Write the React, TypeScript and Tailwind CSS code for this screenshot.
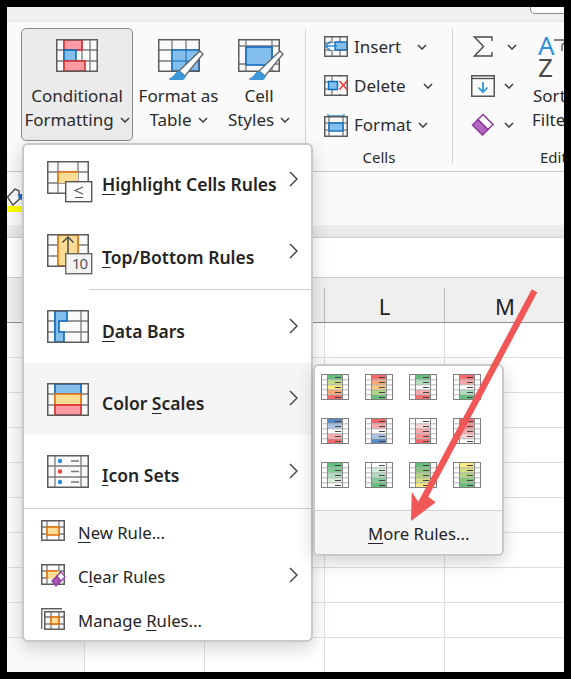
import { ReactNode } from 'react'

const font = '[font-family:"Noto_Sans","Open_Sans",sans-serif]'

function Tbl({ w = 42, h = 33, cols, rows, children }: { w?: number; h?: number; cols: number[]; rows: number[]; children?: ReactNode }) {
  return (
    <g>
      <rect x="0.75" y="0.75" width={w - 1.5} height={h - 1.5} fill="#fafafa" />
      {cols.map((x) => <line key={x} x1={x} x2={x} y1="1" y2={h - 1} stroke="#7a7a7a" strokeWidth="1.3" />)}
      {rows.map((y) => <line key={y} x1="1" x2={w - 1} y1={y} y2={y} stroke="#7a7a7a" strokeWidth="1.3" />)}
      {children}
      <rect x="0.75" y="0.75" width={w - 1.5} height={h - 1.5} fill="none" stroke="#5c5c5c" strokeWidth="1.5" />
    </g>
  )
}

function Cell({ x, y, w, h, fill, stroke }: { x: number; y: number; w: number; h: number; fill: string; stroke: string }) {
  return <rect x={x} y={y} width={w} height={h} fill={fill} stroke={stroke} strokeWidth="1.6" />
}

const blue = { fill: '#83beec', stroke: '#0f6cbd' }
const red = { fill: '#ff99a4', stroke: '#d8312f' }
const orange = { fill: '#fbdc95', stroke: '#e8730c' }

function Brush({ x, y }: { x: number; y: number }) {
  return (
    <g transform={`translate(${x} ${y})`}>
      <path d="M31 0 L34 3 L16 25 L10 20 Z" fill="#fff" stroke="#666" strokeWidth="1.3" />
      <path d="M10 20 C6 21 6 26 0 28 C7 30 17 30 16 25 Z" fill="#3f97dc" stroke="#2f86cc" strokeWidth="0.8" />
    </g>
  )
}

function CondIcon() {
  return (
    <svg width="42" height="33">
      <Tbl cols={[8, 26, 34]} rows={[11, 22]}>
        <Cell x={8} y={1} w={18} h={10} {...red} />
        <Cell x={8} y={11} w={12} h={11} {...blue} />
        <Cell x={8} y={22} w={21} h={10} {...red} />
      </Tbl>
    </svg>
  )
}

function TableStyleIcon() {
  return (
    <svg width="46" height="41" className="ml-[4px]">
      <Tbl cols={[14, 28]} rows={[11, 22]}>
        <rect x="14" y="11" width="27" height="21" fill="#83beec" stroke="#0f6cbd" strokeWidth="1.4" />
        <line x1="14" x2="41" y1="22" y2="22" stroke="#0f6cbd" strokeWidth="1" />
        <line x1="28" x2="28" y1="11" y2="32" stroke="#0f6cbd" strokeWidth="1" />
      </Tbl>
      <Brush x={11} y={12} />
    </svg>
  )
}

function CellStyleIcon() {
  return (
    <svg width="46" height="41" className="ml-[3px]">
      <Tbl cols={[8, 34]} rows={[7, 25]}>
        <rect x="8" y="8" width="26" height="18" fill="#83beec" stroke="#0f6cbd" strokeWidth="1.6" />
      </Tbl>
      <Brush x={11} y={12} />
    </svg>
  )
}

function HighlightIcon() {
  return (
    <svg width="46" height="42">
      <Tbl cols={[11, 31]} rows={[11, 22]}>
        <rect x="11" y="11" width="20" height="11" fill="#fbdc95" />
        <path d="M11 22 V11 H31" fill="none" stroke="#e8730c" strokeWidth="1.6" />
      </Tbl>
      <rect x="18.7" y="20.7" width="26" height="20" fill="#fafafa" stroke="#555" strokeWidth="1.4" />
      <path d="M36 26 L28 29.5 L36 33 M28 36.5 H36" fill="none" stroke="#555" strokeWidth="1.1" />
    </svg>
  )
}

function TopBottomIcon() {
  return (
    <svg width="46" height="41">
      <Tbl cols={[11, 31]} rows={[11, 22]}>
        <Cell x={11} y={1} w={20} h={31} {...orange} />
      </Tbl>
      <path d="M21 19 V3 M15.5 8.5 L21 3 L26.5 8.5" fill="none" stroke="#444" strokeWidth="1.4" />
      <rect x="18.7" y="19.7" width="26" height="20" fill="#f3f3f3" stroke="#666" strokeWidth="1.4" />
      <text x="25" y="35" fontSize="15" fill="#555" fontFamily="Noto Sans" letterSpacing="-1">10</text>
    </svg>
  )
}

function DataBarsIcon() {
  return (
    <svg width="42" height="33">
      <Tbl cols={[8, 34]} rows={[11, 22]}>
        <path d="M8 1 H20 V11 H12 V22 H17 V32 H8 Z" fill="#83beec" stroke="#0f6cbd" strokeWidth="1.6" />
      </Tbl>
    </svg>
  )
}

function ScalesIcon() {
  return (
    <svg width="42" height="33">
      <Tbl cols={[8, 34]} rows={[11, 22]}>
        <Cell x={8} y={1} w={26} h={10} {...blue} />
        <Cell x={8} y={11} w={26} h={11} fill="#fbdc95" stroke="#e8730c" />
        <Cell x={8} y={22} w={26} h={10} {...red} />
      </Tbl>
    </svg>
  )
}

function IconSetsIcon() {
  return (
    <svg width="42" height="33">
      <Tbl cols={[8, 34]} rows={[11, 22]}>
        <circle cx="13" cy="6" r="2.2" fill="#2a8fdc" />
        <circle cx="13" cy="16.5" r="2.2" fill="#ee4444" />
        <circle cx="13" cy="27" r="2.2" fill="#2a8fdc" />
        <path d="M24 6 H32 M24 16.5 H32 M24 27 H32" stroke="#777" strokeWidth="1.4" />
      </Tbl>
    </svg>
  )
}

function NewRuleIcon() {
  return (
    <svg width="24" height="22">
      <Tbl w={24} h={21} cols={[6, 18]} rows={[7, 14]}>
        <Cell x={6} y={7} w={12} h={8} {...orange} />
      </Tbl>
    </svg>
  )
}

function ClearRuleIcon() {
  return (
    <svg width="25" height="23">
      <Tbl w={24} h={21} cols={[6, 18]} rows={[7, 14]}>
        <rect x="6" y="7" width="12" height="8" fill="#fbdc95" />
        <path d="M6 15 V7 H16" fill="none" stroke="#e8730c" strokeWidth="1.6" />
      </Tbl>
      <path d="M10 17 L20 8 L25 13 L15 22 Z" fill="#fff" />
      <path d="M11 17 L16 12 L20 17 L15 22 Z" fill="#a855b5" stroke="#8b3a9a" strokeWidth="1.2" />
      <path d="M16 12 L20 8 L24 13 L20 17 Z" fill="#fff" stroke="#8b3a9a" strokeWidth="1.2" />
    </svg>
  )
}

function ManageRuleIcon() {
  return (
    <svg width="24" height="23">
      <path d="M0.75 21 V0.75 H21" fill="none" stroke="#5c5c5c" strokeWidth="1.3" />
      <g transform="translate(3 3)">
        <Tbl w={21} h={19} cols={[7, 15]} rows={[6, 13]}>
          <Cell x={7} y={6} w={8} h={7} {...orange} />
        </Tbl>
      </g>
    </svg>
  )
}

function InsertIcon() {
  return (
    <svg width="24" height="21">
      <Tbl w={24} h={21} cols={[8, 16]} rows={[7, 14]}>
        <rect x="7" y="7" width="17" height="7" fill="#fff" />
        <rect x="11" y="6" width="12" height="8" fill="#83beec" stroke="#0f6cbd" strokeWidth="1.4" />
      </Tbl>
      <path d="M13 10 H2 M6.5 5 L1.5 10 L6.5 15" fill="none" stroke="#2a8fdc" strokeWidth="1.6" />
    </svg>
  )
}

function DeleteIcon() {
  return (
    <svg width="24" height="21">
      <Tbl w={24} h={21} cols={[8, 16]} rows={[7, 14]}>
        <rect x="13" y="2" width="11" height="17" fill="#fafafa" />
        <rect x="4.5" y="6.5" width="9" height="8" fill="#83beec" stroke="#0f6cbd" strokeWidth="1.5" />
      </Tbl>
      <path d="M15.5 6 L23 14.5 M23 6 L15.5 14.5" stroke="#e83b3b" strokeWidth="1.6" />
    </svg>
  )
}

function FormatIcon() {
  return (
    <svg width="24" height="24">
      <path d="M4 1 V5 M20 1 V5 M4 3 H20" stroke="#2a8fdc" strokeWidth="1.3" />
      <g transform="translate(0 3)">
        <Tbl w={24} h={21} cols={[5, 19]} rows={[7, 14]}>
          <rect x="5" y="7" width="14" height="8" fill="#83beec" stroke="#0f6cbd" strokeWidth="1.4" />
        </Tbl>
      </g>
    </svg>
  )
}

function SigmaIcon() {
  return (
    <svg width="20" height="21">
      <path d="M19 5 V1 H1.5 L10.5 10.5 L1.5 20 H19 V16" fill="none" stroke="#4a4a4a" strokeWidth="1.4" />
    </svg>
  )
}

function FillIcon() {
  return (
    <svg width="24" height="22">
      <rect x="0.75" y="0.75" width="22.5" height="20.5" fill="#fafafa" stroke="#555" strokeWidth="1.5" />
      <line x1="1" x2="23" y1="3.5" y2="3.5" stroke="#555" strokeWidth="1.4" />
      <path d="M12 7 V17 M7.5 12.5 L12 17 L16.5 12.5" fill="none" stroke="#2a8fdc" strokeWidth="1.7" />
    </svg>
  )
}

function EraserIcon() {
  return (
    <svg width="24" height="24">
      <path d="M1.5 12 L7 6.5 L17 16.5 L11.5 22 Z" fill="#b565c4" stroke="#8b3a9a" strokeWidth="1.5" />
      <path d="M7 6.5 L12 1.5 L22 11.5 L17 16.5 Z" fill="#fafafa" stroke="#8b3a9a" strokeWidth="1.5" />
    </svg>
  )
}

function Bucket() {
  return (
    <svg width="15" height="18">
      <path d="M0.5 9 L8 1 L12 3 L12.5 11 L6 17 Z" fill="#fafafa" stroke="#444" strokeWidth="1.3" />
      <path d="M11 6 L15 6 L15 12 L12 11 Z" fill="#1f6fc0" />
    </svg>
  )
}

function Down() {
  return (
    <svg width="10" height="6" className="shrink-0">
      <path d="M1 1 L5 5 L9 1" fill="none" stroke="#3c3c3c" strokeWidth="1.5" />
    </svg>
  )
}

function Right() {
  return (
    <svg width="9" height="16" className="shrink-0">
      <path d="M1 1 L8 8 L1 15" fill="none" stroke="#4a4a4a" strokeWidth="1.5" />
    </svg>
  )
}

function Key({ children }: { children: ReactNode }) {
  return <span className="underline underline-offset-[3px]">{children}</span>
}

function RibbonButton({ icon, children, className }: { icon: ReactNode; children: ReactNode; className: string }) {
  return (
    <div className={`flex shrink-0 flex-col items-center pt-[10px] text-center text-[17px] leading-[24px] ${className}`}>
      <div className="flex h-[45px] items-start">{icon}</div>
      {children}
    </div>
  )
}

function CellRow({ icon, label, textClass }: { icon: ReactNode; label: string; textClass: string }) {
  return (
    <div className="flex h-[39px] items-center text-[17px]">
      <div className="flex w-[30px] shrink-0 justify-start">{icon}</div>
      <span className={`shrink-0 ${textClass}`}>{label}</span>
      <Down />
    </div>
  )
}

function Ribbon() {
  return (
    <div className="flex h-[150px] shrink-0 items-start overflow-hidden whitespace-nowrap border-b border-[#c9c9c9] bg-[#fafafa] text-[#2b2b2b]">
      <RibbonButton
        icon={<CondIcon />}
        className="ml-[14px] mt-[6px] h-[113px] w-[112px] rounded-[5px] border border-[#8a8a8a] bg-[#ebebeb]"
      >
        <span>Conditional</span>
        <span className="flex items-center gap-[6px]">Formatting <Down /></span>
      </RibbonButton>
      <RibbonButton icon={<TableStyleIcon />} className="mt-[7px] ml-[2px] w-[87px]">
        <span>Format as</span>
        <span className="flex items-center gap-[6px]">Table <Down /></span>
      </RibbonButton>
      <RibbonButton icon={<CellStyleIcon />} className="mt-[7px] ml-[6px] w-[62px]">
        <span>Cell</span>
        <span className="flex items-center gap-[6px]">Styles <Down /></span>
      </RibbonButton>

      <div className="ml-[15px] mt-[7px] h-[134px] w-px shrink-0 bg-[#d4d4d4]" />

      <div className="flex w-[146px] shrink-0 flex-col pl-[18px] pt-[5px]">
        <CellRow icon={<InsertIcon />} label="Insert" textClass="w-[63px]" />
        <CellRow icon={<DeleteIcon />} label="Delete" textClass="w-[69px]" />
        <CellRow icon={<FormatIcon />} label="Format" textClass="w-[64px]" />
        <div className="-ml-[18px] mt-[2px] text-center text-[15px] leading-[22px]">Cells</div>
      </div>

      <div className="mt-[7px] h-[134px] w-px shrink-0 bg-[#d4d4d4]" />

      <div className="flex shrink-0 flex-col pl-[18px] pt-[5px]">
        <div className="flex h-[39px] items-center gap-[14px] pl-[2px]"><SigmaIcon /><Down /></div>
        <div className="flex h-[39px] items-center gap-[9px]"><FillIcon /><Down /></div>
        <div className="flex h-[39px] items-center gap-[9px]"><EraserIcon /><Down /></div>
      </div>

      <div className="ml-[16px] flex shrink-0 flex-col text-[17px] leading-[24px]">
        <div className="ml-[5px] mt-[12px] flex items-start">
          <div className="flex flex-col text-[26px] leading-[22px]">
            <span className="text-[#2a8fdc]">A</span>
            <span className="text-[#4a4a4a]">Z</span>
          </div>
          <svg width="14" height="14" className="ml-[-2px] mt-[5px] shrink-0">
            <path d="M1 1 H14 L9 6 V12" fill="none" stroke="#555" strokeWidth="1.3" />
          </svg>
        </div>
        <span className="mt-[6px]">Sort &amp;</span>
        <span className="-ml-px">Filter</span>
        <span className="ml-[7px] mt-[14px] text-[15px] leading-[22px]">Editing</span>
      </div>
    </div>
  )
}

function Sheet() {
  return (
    <div className="flex flex-1 flex-col overflow-hidden">
      {/* formula bar remains */}
      <div className="h-[53px] shrink-0 bg-[#fafafa] pt-[16px]">
        <Bucket />
        <div className="h-[6px] w-[15px] bg-[#ffff00]" />
      </div>
      <div className="h-[13px] shrink-0 border-b border-[#d0d0d0] bg-gradient-to-b from-[#efefef] to-[#e6e6e6]" />
      <div className="h-[39px] shrink-0 bg-white" />
      <div className="flex h-[46px] shrink-0 border-y border-t-[#cfcfcf] border-b-[#8e8e8e] bg-[#efefef] text-[22px] text-[#222]">
        <div className="w-[78px] shrink-0" />
        <div className="w-[120px] shrink-0" />
        <div className="mt-[10px] w-[120px] shrink-0 border-r border-[#b5b5b5]" />
        <div className="mt-[10px] flex w-[120px] shrink-0 justify-center border-r border-[#b5b5b5] leading-[36px]">L</div>
        <div className="flex w-[120px] shrink-0 justify-center leading-[56px]">M</div>
      </div>
      {Array.from({ length: 10 }).map((_, i) => (
        <div key={i} className="flex h-[35px] shrink-0 border-b border-[#dedede]">
          <div className="w-[78px] shrink-0 border-r border-[#dedede] bg-[#fafafa]" />
          <div className="w-[120px] shrink-0 border-r border-[#dedede]" />
          <div className="w-[120px] shrink-0 border-r border-[#dedede]" />
          <div className="w-[120px] shrink-0 border-r border-[#dedede]" />
          <div className="w-[120px] shrink-0" />
        </div>
      ))}
    </div>
  )
}

const mainItems = [
  { icon: <HighlightIcon />, label: <><Key>H</Key>ighlight Cells Rules</>, rowClass: 'h-[74px]', textClass: 'pt-[4px]', arrowClass: 'pb-[6px]' },
  { icon: <TopBottomIcon />, label: <><Key>T</Key>op/Bottom Rules</>, rowClass: 'h-[70px]', textClass: 'pt-[6px]', arrowClass: 'pb-[6px]' },
  { icon: <DataBarsIcon />, label: <><Key>D</Key>ata Bars</>, rowClass: 'h-[73px]', textClass: 'pt-[10px]', arrowClass: 'pb-[2px]' },
  { icon: <ScalesIcon />, label: <>Color <Key>S</Key>cales</>, rowClass: 'h-[72px] bg-[#f5f5f5]', textClass: 'pt-[8px]', arrowClass: 'pb-[2px]' },
  { icon: <IconSetsIcon />, label: <><Key>I</Key>con Sets</>, rowClass: 'h-[73px]', textClass: 'pt-[8px]', arrowClass: 'pb-[2px]' },
]

const smallItems = [
  { icon: <NewRuleIcon />, label: <><Key>N</Key>ew Rule...</>, more: false },
  { icon: <ClearRuleIcon />, label: <>C<Key>l</Key>ear Rules</>, more: true },
  { icon: <ManageRuleIcon />, label: <>Manage <Key>R</Key>ules...</>, more: false },
]

function RulesMenu() {
  return (
    <div className="absolute left-[15px] top-[136px] h-[499px] w-[291px] overflow-hidden rounded-[6px] border-2 border-[#c8c8c8] bg-white text-[#242424] shadow-[0_6px_18px_rgba(0,0,0,0.18)]">
      {mainItems.map((item, i) => (
        <div key={i}>
          <div className={`flex items-center pl-[23px] pr-[13px] ${item.rowClass}`}>
            <div className="flex w-[55px] shrink-0">{item.icon}</div>
            <span className={`text-[17.5px] font-semibold ${item.textClass}`}>{item.label}</span>
            <div className={`ml-auto flex ${item.arrowClass}`}><Right /></div>
          </div>
          {i === 1 && <div className="ml-[65px] h-px bg-[#d0d0d0]" />}
        </div>
      ))}
      <div className="h-px bg-[#d0d0d0]" />
      {smallItems.map((item, i) => (
        <div key={i} className="flex h-[44px] items-center pl-[17px] pr-[13px]">
          <div className="flex w-[37px] shrink-0">{item.icon}</div>
          <span className="pt-[4px] text-[16.7px]">{item.label}</span>
          {item.more && <div className="ml-auto flex"><Right /></div>}
        </div>
      ))}
    </div>
  )
}

const scales = [
  ['#63be7b', '#c5da84', '#fdea84', '#fba777', '#f8696b'],
  ['#f8696b', '#fba777', '#fcc87d', '#b1d580', '#63be7b'],
  ['#63be7b', '#b1dcbd', '#ffffff', '#fbaaac', '#f8696b'],
  ['#f8696b', '#fbaaac', '#ffffff', '#b1dcbd', '#63be7b'],
  ['#5a8ac6', '#a9c4e4', '#ffffff', '#fbaaac', '#f8696b'],
  ['#f8696b', '#fbaaac', '#ffffff', '#a9c4e4', '#5a8ac6'],
  ['#ffffff', '#fcd4d4', '#fbaaac', '#fa8f8f', '#f8696b'],
  ['#f8696b', '#fa8f8f', '#fbaaac', '#fcd4d4', '#ffffff'],
  ['#63be7b', '#83cb95', '#b1dcbd', '#d8eedd', '#ffffff'],
  ['#ffffff', '#d8eedd', '#b1dcbd', '#83cb95', '#63be7b'],
  ['#63be7b', '#85c67c', '#b1d580', '#d4de82', '#ffeb84'],
  ['#ffeb84', '#d4de82', '#b1d580', '#85c67c', '#63be7b'],
]

function ScaleIcon({ colors }: { colors: string[] }) {
  return (
    <svg width="28" height="26">
      <rect x="0.5" y="0.5" width="27" height="25" fill="#fff" />
      {colors.map((c, i) => (
        <g key={i}>
          <rect x="6.5" y={1 + i * 5} width="15" height="4.6" fill={c} />
          <line x1="14" x2="20" y1={3.5 + i * 5} y2={3.5 + i * 5} stroke="#444" strokeWidth="1" />
        </g>
      ))}
      {[1, 2, 3, 4].map((i) => (
        <line key={i} x1="1" x2="27" y1={0.8 + i * 5} y2={0.8 + i * 5} stroke="#a3a3a3" strokeWidth="0.8" />
      ))}
      <path d="M6.5 1 V25 M21.5 1 V25" stroke="#8a8a8a" strokeWidth="1" />
      <rect x="0.5" y="0.5" width="27" height="25" fill="none" stroke="#7f7f7f" strokeWidth="1" />
    </svg>
  )
}

function ScalesMenu() {
  return (
    <div className="absolute left-[306px] top-[357px] w-[191px] overflow-hidden rounded-[6px] border-2 border-[#c8c8c8] bg-white text-[#242424] shadow-[0_6px_18px_rgba(0,0,0,0.18)]">
      <div className="grid grid-cols-[repeat(4,28px)] gap-x-[16px] gap-y-[18px] pb-[22px] pl-[6px] pt-[8px]">
        {scales.map((colors, i) => <ScaleIcon key={i} colors={colors} />)}
      </div>
      <div className="flex h-[44px] items-center border-t border-[#d0d0d0] bg-[#f5f5f5] pl-[53px] pt-[3px] text-[16.7px]">
        <span><Key>M</Key>ore Rules...</span>
      </div>
    </div>
  )
}

function RedArrow() {
  return (
    <svg width="557" height="665" viewBox="7 7 557 665" className="pointer-events-none absolute left-0 top-0">
      <polygon
        points="411,521 411.7,491.7 418.3,501.7 531.7,289.3 537.3,292.3 428.3,496.7 435.7,502.3"
        fill="#f25757"
      />
    </svg>
  )
}

export default function App() {
  return (
    <div className={`h-[679px] w-[571px] bg-black p-[7px] ${font}`}>
      <div className="relative flex h-[665px] w-[557px] flex-col overflow-hidden bg-white">
        <div className="flex h-[15px] shrink-0 items-start justify-end border-b border-[#e6e6e6] bg-[#f0f0f0]">
          <div className="h-[7px] w-[34px] rounded-bl-[5px] border-b border-l border-[#8a8a8a] bg-white" />
        </div>
        <Ribbon />
        <Sheet />
        <RulesMenu />
        <ScalesMenu />
        <RedArrow />
      </div>
    </div>
  )
}
